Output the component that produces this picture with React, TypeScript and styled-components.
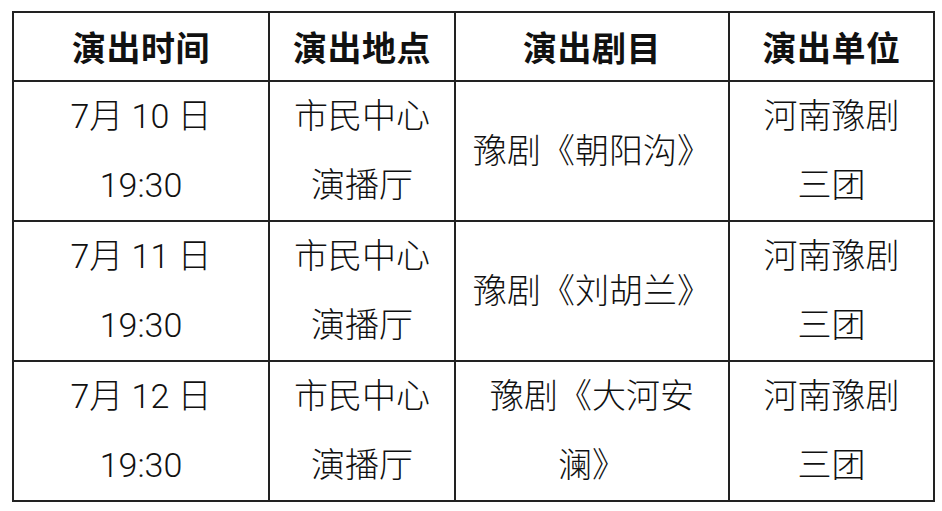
import React from "react";
import styled, { createGlobalStyle } from "styled-components";

const Global = createGlobalStyle`
  html, body { margin: 0; padding: 0; background: #fff; }
  body { font-family: "Liberation Sans", "Noto Sans CJK SC", sans-serif; color: #111; }
`;

const Page = styled.div`
  padding: 11px 0 0 12px;
  width: 942px;
  height: 511px;
  box-sizing: border-box;
  overflow: hidden;
`;

const Table = styled.table`
  border-collapse: collapse;
  table-layout: fixed;
  width: 921px;
`;

const Col = styled.col<{ $w: number }>`
  width: ${(p) => p.$w}px;
`;

const HeadCell = styled.th`
  border: 2px solid #222;
  height: 67px;
  padding: 0;
  font-size: 34px;
  font-weight: 700;
  text-align: center;
  vertical-align: middle;
  letter-spacing: 0.5px;
`;

const Cell = styled.td`
  border: 2px solid #222;
  padding: 0 6px;
  font-family: "Roboto", "Noto Sans CJK SC", sans-serif;
  font-size: 34px;
  font-weight: 300;
  line-height: 69px;
  text-align: center;
  vertical-align: middle;
  word-break: break-all;
`;

const Line = styled.div`
  white-space: nowrap;
`;

const Play = styled.div<{ $wrap?: boolean }>`
  margin: 0 auto;
  width: ${(p) => (p.$wrap ? "212px" : "auto")};
`;

const rows = [
  { date: "7月 10 日", play: "豫剧《朝阳沟》", wrap: false },
  { date: "7月 11 日", play: "豫剧《刘胡兰》", wrap: false },
  { date: "7月 12 日", play: "豫剧《大河安澜》", wrap: true },
];

export default function App() {
  return (
    <Page>
      <Global />
      <Table>
        <colgroup>
          <Col $w={256} />
          <Col $w={186} />
          <Col $w={274} />
          <Col $w={205} />
        </colgroup>
        <thead>
          <tr>
            <HeadCell>演出时间</HeadCell>
            <HeadCell>演出地点</HeadCell>
            <HeadCell>演出剧目</HeadCell>
            <HeadCell>演出单位</HeadCell>
          </tr>
        </thead>
        <tbody>
          {rows.map((r) => (
            <tr key={r.date}>
              <Cell>
                <Line>{r.date}</Line>
                <Line>19:30</Line>
              </Cell>
              <Cell>
                <Line>市民中心</Line>
                <Line>演播厅</Line>
              </Cell>
              <Cell>
                <Play $wrap={r.wrap}>{r.play}</Play>
              </Cell>
              <Cell>
                <Line>河南豫剧</Line>
                <Line>三团</Line>
              </Cell>
            </tr>
          ))}
        </tbody>
      </Table>
    </Page>
  );
}
